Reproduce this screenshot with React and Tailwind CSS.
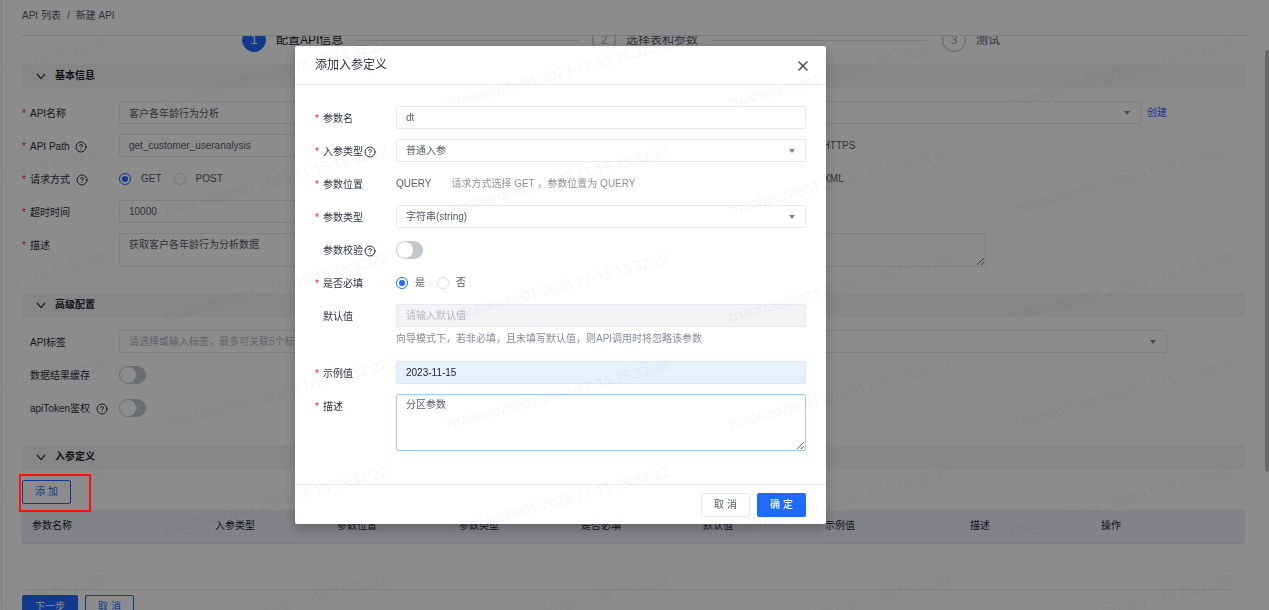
import { useState } from 'react';
import { CircleHelp, X } from 'lucide-react';

const steps = ['配置API信息', '选择表和参数', '测试'];

const columns = [
  { title: '参数名称', width: 'w-[183px]' },
  { title: '入参类型', width: 'w-[122px]' },
  { title: '参数位置', width: 'w-[122px]' },
  { title: '参数类型', width: 'w-[122px]' },
  { title: '是否必填', width: 'w-[122px]' },
  { title: '默认值', width: 'w-[122px]' },
  { title: '示例值', width: 'w-[145px]' },
  { title: '描述', width: 'w-[131px]' },
  { title: '操作', width: '' },
];

const inputClass =
  'block h-[23px] w-full rounded-xs border border-[#e7e9ed] bg-white px-[9px] text-[#565b69] outline-none placeholder:text-[#b4b7bf] disabled:bg-[#f2f3f5]';

function Label({ htmlFor, required, help, className, children }) {
  return (
    <label htmlFor={htmlFor} className={`flex h-[23px] shrink-0 items-center pt-0.5 text-[#2b3040] ${className}`}>
      <span className="w-2 leading-none text-[#f5222d]">{required ? '*' : ''}</span>
      {children}
      {help ? <CircleHelp size={12} strokeWidth={2} className={help} /> : null}
    </label>
  );
}

function PageField({ id, label, required, help, right, children }) {
  return (
    <div className="flex min-w-0">
      <Label
        htmlFor={id}
        required={required}
        help={help ? 'ml-1.5' : ''}
        className={right ? 'w-[107px]' : 'w-[97px]'}
      >
        {label}
      </Label>
      <div className="min-w-0 flex-1">{children}</div>
    </div>
  );
}

function ModalField({ id, label, required, help, children }) {
  return (
    <div className="flex">
      <Label htmlFor={id} required={required} help={help ? 'ml-px' : ''} className="w-[81px]">
        {label}
      </Label>
      <div className="min-w-0 flex-1">{children}</div>
    </div>
  );
}

function Select({ id, options, placeholder }) {
  return (
    <div className="relative">
      <select id={id} className={`${inputClass} appearance-none ${placeholder ? 'text-[#b4b7bf]' : ''}`}>
        {options.map((option) => (
          <option key={option}>{option}</option>
        ))}
      </select>
      <svg viewBox="0 0 6 4" className="pointer-events-none absolute top-[10px] right-[11px] h-1 w-1.5 fill-[#7d8494]">
        <path d="M0 0h6L3 4z" />
      </svg>
    </div>
  );
}

function Radios({ name, options, gap }) {
  return (
    <div className="flex h-[23px] items-center gap-3">
      {options.map((option, i) => (
        <label key={option} className={`flex items-center text-[#565b69] ${gap}`}>
          <input
            type="radio"
            name={name}
            defaultChecked={i === 0}
            className="flex size-3 appearance-none items-center justify-center rounded-full border border-[#dcdfe4] bg-white checked:border-[#1f6bff] checked:before:size-1.5 checked:before:rounded-full checked:before:bg-[#1f6bff]"
          />
          {option}
        </label>
      ))}
    </div>
  );
}

function Switch({ id }) {
  return (
    <div className="flex h-[23px] items-center">
      <input
        id={id}
        type="checkbox"
        role="switch"
        className="flex h-[18px] w-[27px] appearance-none items-center rounded-full bg-[#c3c8ce] px-px before:size-4 before:rounded-full before:bg-white checked:justify-end checked:bg-[#1f6bff]"
      />
    </div>
  );
}

function SectionTitle({ children }) {
  return (
    <h2 className="flex h-6 items-center bg-[#f5f5f5] pl-[14px] font-bold text-[#20242f]">
      <svg viewBox="0 0 10 7" className="mr-[9px] h-[7px] w-[10px] fill-none stroke-[#2b3040]">
        <path d="M1 1l4 4.6L9 1" strokeWidth="1.2" />
      </svg>
      {children}
    </h2>
  );
}

function Steps() {
  return (
    <ol className="-mt-2 flex items-center pr-[245px] pl-[220px]">
      {steps.map((step, i) => (
        <li key={step} className={`flex items-center ${i < 2 ? 'flex-1' : ''}`}>
          <span
            className={`flex size-6 shrink-0 items-center justify-center rounded-full border text-xs ${
              i === 0 ? 'border-[#1f6bff] bg-[#1f6bff] text-white' : 'border-[#b9bcc4] text-[#a5a8b0]'
            }`}
          >
            {i + 1}
          </span>
          <span className={`ml-[10px] text-xs whitespace-nowrap ${i === 0 ? 'text-[#20242f]' : 'text-[#565b69]'}`}>
            {step}
          </span>
          {i < 2 ? <span className="mx-[13px] h-px flex-1 bg-[#e0e2e6]" /> : null}
        </li>
      ))}
    </ol>
  );
}

function Page({ onAdd }) {
  return (
    <div className="ml-px border-l border-[#e4e6ea] pl-5">
      <nav className="mr-5 flex h-9 items-center gap-1.5 border-b border-[#dcdfe4] pb-1 text-[#565b69]">
        <a href="#list">API 列表</a>
        <span>/</span>
        <a href="#new">新建 API</a>
      </nav>

      <main className="mr-6 overflow-hidden">
        <Steps />

        <section className="mt-3">
          <SectionTitle>基本信息</SectionTitle>
          <div className="mt-[13px] grid grid-cols-2 gap-y-[10px] pb-[26px]">
            <PageField id="name" label="API名称" required>
              <input id="name" defaultValue="客户各年龄行为分析" className={`${inputClass} max-w-[401px]`} />
            </PageField>
            <PageField id="group" label="API分组" required right>
              <div className="flex items-center gap-1.5 pr-[78px]">
                <div className="flex-1">
                  <Select id="group" options={['']} />
                </div>
                <a href="#create" className="text-[#1f6bff]">创建</a>
              </div>
            </PageField>
            <PageField id="path" label="API Path" required help>
              <input id="path" defaultValue="get_customer_useranalysis" className={`${inputClass} max-w-[401px]`} />
            </PageField>
            <PageField label="协议" required right>
              <Radios name="protocol" options={['HTTP', 'HTTPS']} gap="gap-[10px]" />
            </PageField>
            <PageField label="请求方式" required help>
              <Radios name="method" options={['GET', 'POST']} gap="gap-[10px]" />
            </PageField>
            <PageField label="返回类型" required right>
              <Radios name="format" options={['JSON', 'XML']} gap="gap-[10px]" />
            </PageField>
            <PageField id="timeout" label="超时时间" required>
              <input id="timeout" defaultValue="10000" className={`${inputClass} max-w-[401px]`} />
            </PageField>
            <div className="col-span-2">
              <PageField id="desc" label="描述" required>
                <textarea
                  id="desc"
                  defaultValue="获取客户各年龄行为分析数据"
                  className="block h-[34px] w-full max-w-[867px] resize-y overflow-hidden rounded-xs border border-[#e7e9ed] bg-white px-[9px] py-[3px] text-[#565b69]"
                />
              </PageField>
            </div>
          </div>
        </section>

        <section>
          <SectionTitle>高级配置</SectionTitle>
          <div className="mt-[13px] flex flex-col gap-[10px] pr-[78px] pb-[26px]">
            <PageField id="tags" label="API标签">
              <Select id="tags" placeholder options={['请选择或输入标签，最多可关联5个标签']} />
            </PageField>
            <PageField id="cache" label="数据结果缓存">
              <Switch id="cache" />
            </PageField>
            <PageField id="token" label="apiToken鉴权" help>
              <Switch id="token" />
            </PageField>
          </div>
        </section>

        <section>
          <SectionTitle>入参定义</SectionTitle>
          <button
            onClick={onAdd}
            className="mt-[11px] block h-6 w-[49px] rounded-xs border border-[#1f6bff] text-[#1f6bff]"
          >
            添 加
          </button>
          <table className="mt-1.5 w-full table-fixed text-left">
            <thead>
              <tr className="h-[33px] border-b border-[#e0e3ea] bg-[#eceef6]">
                {columns.map((column) => (
                  <th key={column.title} className={`pl-[10px] font-normal text-[#20242f] ${column.width}`}>
                    {column.title}
                  </th>
                ))}
              </tr>
            </thead>
          </table>
        </section>
      </main>

      <footer className="mt-[45px] mr-9 flex gap-[7px] border-t border-[#e4e6ea] pt-[5px]">
        <button className="h-6 w-14 rounded-xs bg-[#1f6bff] text-white">下一步</button>
        <button className="h-6 w-[49px] rounded-xs border border-[#1f6bff] text-[#1f6bff]">取 消</button>
      </footer>
    </div>
  );
}

function ParamModal({ onClose }) {
  return (
    <div className="fixed inset-0 flex items-start justify-center bg-black/45 pt-[46px] pr-[148px]">
      <div
        role="dialog"
        aria-labelledby="modal-title"
        className="w-[531px] rounded-xs bg-white shadow-[0_4px_12px_rgba(0,0,0,0.25)]"
      >
        <div className="flex h-[39px] items-center justify-between border-b border-[#e7e9ed] pr-[15px] pl-5">
          <h3 id="modal-title" className="text-xs text-[#2b3040]">添加入参定义</h3>
          <button aria-label="关闭" onClick={onClose} className="pt-0.5 text-[#4b5162]">
            <X size={16} strokeWidth={2.4} />
          </button>
        </div>

        <div className="flex flex-col gap-[10px] px-5 pt-[21px] pb-[33px]">
          <ModalField id="p-name" label="参数名" required>
            <input id="p-name" defaultValue="dt" className={inputClass} />
          </ModalField>
          <ModalField id="p-kind" label="入参类型" required help>
            <Select id="p-kind" options={['普通入参']} />
          </ModalField>
          <ModalField label="参数位置" required>
            <div className="flex h-[23px] items-center gap-5 text-[#565b69]">
              <span>QUERY</span>
              <span className="text-[#8e929c]">请求方式选择 GET ，参数位置为 QUERY</span>
            </div>
          </ModalField>
          <ModalField id="p-type" label="参数类型" required>
            <Select id="p-type" options={['字符串(string)']} />
          </ModalField>
          <ModalField id="p-check" label="参数校验" help>
            <Switch id="p-check" />
          </ModalField>
          <ModalField label="是否必填" required>
            <Radios name="required" options={['是', '否']} gap="gap-[7px]" />
          </ModalField>
          <ModalField id="p-default" label="默认值">
            <input id="p-default" disabled placeholder="请输入默认值" className={inputClass} />
            <p className="mt-1 mb-1 h-4 leading-4 text-[#858b9b]">
              向导模式下，若非必填，且未填写默认值，则API调用时将忽略该参数
            </p>
          </ModalField>
          <ModalField id="p-sample" label="示例值" required>
            <input
              id="p-sample"
              defaultValue="2023-11-15"
              className="block h-[23px] w-full rounded-xs border border-[#dde5f5] bg-[#e8f0fe] px-[9px] text-[#20242f]"
            />
          </ModalField>
          <ModalField id="p-desc" label="描述" required>
            <textarea
              id="p-desc"
              defaultValue="分区参数"
              className="block h-[57px] w-full resize-y rounded-xs border border-[#a3c5ff] px-[9px] py-0.5 text-[#565b69] outline-none"
            />
          </ModalField>
        </div>

        <div className="flex h-10 items-center justify-end gap-[7px] border-t border-[#e7e9ed] px-5">
          <button onClick={onClose} className="h-6 w-[49px] rounded-xs border border-[#e7e9ed] text-[#565b69]">
            取 消
          </button>
          <button onClick={onClose} className="h-6 w-[49px] rounded-xs bg-[#1f6bff] font-medium text-white">
            确 定
          </button>
        </div>
      </div>
    </div>
  );
}

function Watermark() {
  return (
    <svg className="pointer-events-none fixed inset-0 h-full w-full" aria-hidden="true">
      <defs>
        <pattern id="mark" x="150" y="10" width="282" height="107" patternUnits="userSpaceOnUse">
          <text
            transform="translate(15 98) rotate(-15)"
            fontFamily="'Open Sans', sans-serif"
            fontSize="14"
            fill="#000"
            fillOpacity="0.04"
          >
            zhaohaozhe01 2023-11-15 15:32:22
          </text>
        </pattern>
      </defs>
      <rect width="100%" height="100%" fill="url(#mark)" />
    </svg>
  );
}

export default function App() {
  const [open, setOpen] = useState(true);

  return (
    <div className="relative h-screen overflow-hidden bg-white font-['Liberation_Sans','Noto_Sans_CJK_SC',sans-serif] text-[10px] leading-4">
      <Page onAdd={() => setOpen(true)} />
      <div className="absolute top-[50px] right-0 h-[422px] w-1 rounded-full bg-[#bfbfbf]" />
      {open ? <ParamModal onClose={() => setOpen(false)} /> : null}
      <Watermark />
      <div className="pointer-events-none absolute top-[474px] left-[19px] h-[38px] w-[72px] border-2 border-[#ff0f0f]" />
    </div>
  );
}
